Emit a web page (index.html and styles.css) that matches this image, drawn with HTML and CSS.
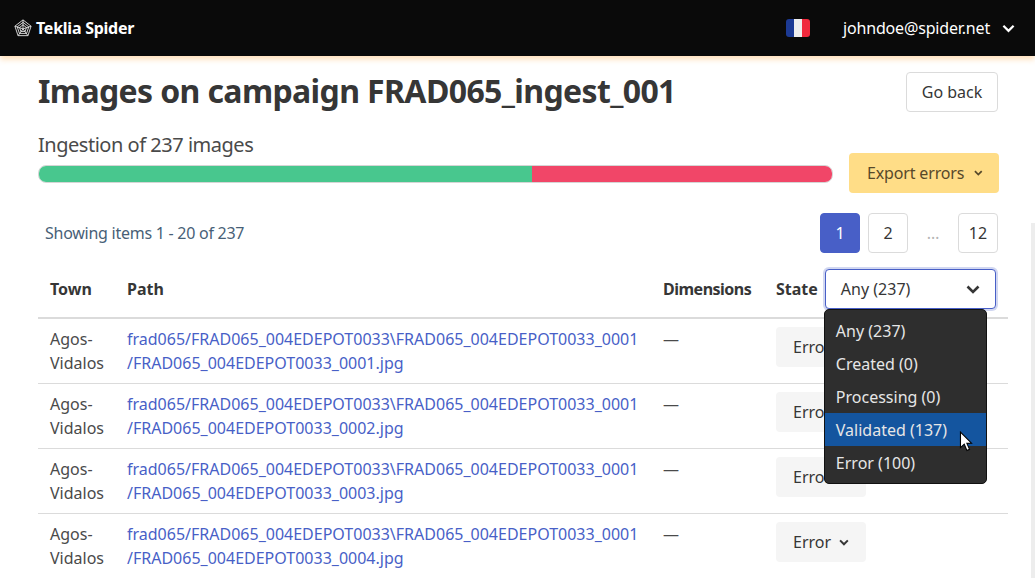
FILE: index.html
```html
<!DOCTYPE html>
<html lang="en">
<head>
  <meta charset="UTF-8">
  <title>Teklia Spider</title>
  <link rel="stylesheet" href="styles.css">
</head>
<body>
  <!-- Top bar -->
  <nav class="navbar">
    <a class="brand">
      <svg class="brand-icon" viewBox="0 0 20 20" width="18" height="18" fill="none" stroke="#e4e4e4" stroke-width="1">
        <path d="M10 1 L19 8 L15.5 18.5 L4.500 18.5 L1 8 Z"/>
        <path d="M10 3.800 L16.400 8.700 L14 16 L6 16 L3.600 8.700 Z"/>
        <path d="M10 6.500 L13.800 9.400 L12.400 13.800 L7.600 13.800 L6.200 9.400 Z"/>
        <path d="M10 1 L10 11 M19 8 L10 11 M15.500 18.500 L10 11 M4.500 18.500 L10 11 M1 8 L10 11"/>
      </svg>
      Teklia Spider
    </a>
    <div class="nav-right">
      <span class="flag"><i class="flag-blue"></i><i class="flag-white"></i><i class="flag-red"></i></span>
      <span class="user">johndoe@spider.net</span>
      <svg class="chevron" viewBox="0 0 14 9" width="13" height="9"><path d="M1.500 1.500 L7 7 L12.500 1.500" fill="none" stroke="#fff" stroke-width="2.400"/></svg>
    </div>
  </nav>

  <div class="scroll-track"></div>

  <div class="page">
    <div class="title-row">
      <h1>Images on campaign FRAD065_ingest_001</h1>
      <button class="btn btn-back">Go back</button>
    </div>

    <div class="progress-row">
      <div class="progress-col">
        <div class="subtitle">Ingestion of 237 images</div>
        <div class="progress">
          <div class="progress-ok"></div>
          <div class="progress-err"></div>
        </div>
      </div>
      <button class="btn btn-export">Export errors
        <svg viewBox="0 0 14 9" width="11" height="8"><path d="M1.500 1.500 L7 7 L12.500 1.500" fill="none" stroke="#57492a" stroke-width="2.800"/></svg>
      </button>
    </div>

    <div class="pager-row">
      <span class="showing">Showing items 1 - 20 of 237</span>
      <div class="pager">
        <a class="page-link current">1</a>
        <a class="page-link">2</a>
        <span class="page-gap">…</span>
        <a class="page-link">12</a>
      </div>
    </div>

    <table class="images">
      <thead>
        <tr>
          <th class="col-town">Town</th>
          <th class="col-path">Path</th>
          <th class="col-dim">Dimensions</th>
          <th class="col-state">
            <div class="state-head">
              State
              <div class="select-wrap">
                <div class="select">Any (237)
                  <svg viewBox="0 0 14 9" width="14" height="9"><path d="M1.500 1.500 L7 7 L12.500 1.500" fill="none" stroke="#363636" stroke-width="2.600"/></svg>
                </div>
                <ul class="menu">
                  <li>Any (237)</li>
                  <li>Created (0)</li>
                  <li>Processing (0)</li>
                  <li class="active">Validated (137)</li>
                  <li>Error (100)</li>
                </ul>
                <svg class="cursor" viewBox="0 0 12 19" width="14" height="21"><path d="M1 1 L1 15 L4.400 12 L6.800 17.600 L9.200 16.600 L6.800 11.200 L11 11 Z" fill="#fff" stroke="#000" stroke-width="1"/></svg>
              </div>
            </div>
          </th>
        </tr>
      </thead>
      <tbody>
        <tr>
          <td>Agos-Vidalos</td>
          <td><a>frad065/FRAD065_004EDEPOT0033\FRAD065_004EDEPOT0033_0001<br>/FRAD065_004EDEPOT0033_0001.jpg</a></td>
          <td>—</td>
          <td><button class="btn btn-state">Error <svg viewBox="0 0 14 9" width="10" height="7"><path d="M1.500 1.500 L7 7 L12.500 1.500" fill="none" stroke="#363636" stroke-width="2.800"/></svg></button></td>
        </tr>
        <tr>
          <td>Agos-Vidalos</td>
          <td><a>frad065/FRAD065_004EDEPOT0033\FRAD065_004EDEPOT0033_0001<br>/FRAD065_004EDEPOT0033_0002.jpg</a></td>
          <td>—</td>
          <td><button class="btn btn-state">Error <svg viewBox="0 0 14 9" width="10" height="7"><path d="M1.500 1.500 L7 7 L12.500 1.500" fill="none" stroke="#363636" stroke-width="2.800"/></svg></button></td>
        </tr>
        <tr>
          <td>Agos-Vidalos</td>
          <td><a>frad065/FRAD065_004EDEPOT0033\FRAD065_004EDEPOT0033_0001<br>/FRAD065_004EDEPOT0033_0003.jpg</a></td>
          <td>—</td>
          <td><button class="btn btn-state">Error <svg viewBox="0 0 14 9" width="10" height="7"><path d="M1.500 1.500 L7 7 L12.500 1.500" fill="none" stroke="#363636" stroke-width="2.800"/></svg></button></td>
        </tr>
        <tr>
          <td>Agos-Vidalos</td>
          <td><a>frad065/FRAD065_004EDEPOT0033\FRAD065_004EDEPOT0033_0001<br>/FRAD065_004EDEPOT0033_0004.jpg</a></td>
          <td>—</td>
          <td><button class="btn btn-state">Error <svg viewBox="0 0 14 9" width="10" height="7"><path d="M1.500 1.500 L7 7 L12.500 1.500" fill="none" stroke="#363636" stroke-width="2.800"/></svg></button></td>
        </tr>
      </tbody>
    </table>
  </div>
</body>
</html>
```

FILE: styles.css
```css
html, body {
  height: 578px;
  overflow: hidden;
}

body {
  font-family: "Noto Sans", sans-serif;
  font-size: 16px;
  line-height: 24px;
  color: #4a4a4a;
  background: #fff;
  margin: 0;
}

.navbar {
  height: 56px;
  background: #0a0a0a;
  color: #fff;
  display: flex;
  align-items: center;
  justify-content: space-between;
  padding: 0 20px 0 14px;
  box-shadow: 0 3px 6px rgba(255, 170, 70, 0.4);
  position: relative;
  z-index: 2;
}

.brand {
  display: flex;
  align-items: center;
  gap: 4px;
  font-weight: 700;
  font-size: 16px;
  letter-spacing: -0.25px;
}

.nav-right {
  display: flex;
  align-items: center;
}

.flag {
  display: flex;
  width: 24px;
  height: 18px;
  border-radius: 3px;
  overflow: hidden;
  margin-right: 33px;
}

.flag i {
  flex: 1;
}

.flag-blue { background: #1c3a94; }
.flag-white { background: #eeeeee; }
.flag-red { background: #f0283c; }

.user {
  margin-right: 12px;
  letter-spacing: -0.17px;
}

.scroll-track {
  position: absolute;
  left: 1031px;
  top: 223px;
  width: 4px;
  bottom: 0;
  background: #ededed;
}

.page {
  padding: 0 27px 0 38px;
}

.title-row {
  display: flex;
  justify-content: space-between;
  align-items: flex-start;
  padding-top: 16px;
}

h1 {
  margin: 0;
  font-size: 32px;
  line-height: 38px;
  font-weight: 700;
  color: #363636;
  letter-spacing: -0.62px;
}

.btn {
  font-family: inherit;
  font-size: 16px;
  height: 40px;
  border-radius: 4px;
  border: 1px solid transparent;
  padding: 0 16px;
  color: #363636;
  background: #fff;
}

.btn-back {
  width: 92px;
  padding: 0;
  border-color: #dbdbdb;
  margin-right: 10px;
}

.progress-row {
  display: flex;
  justify-content: space-between;
  align-items: flex-end;
  margin-top: 20px;
  margin-right: 9px;
}

.progress-col {
  width: 795px;
}

.subtitle {
  font-size: 20px;
  line-height: 25px;
  margin-bottom: 8px;
  letter-spacing: -0.48px;
}

.progress {
  display: flex;
  height: 16px;
  border-radius: 8px;
  overflow: hidden;
  border: 1px solid #d5d5d5;
}

.progress-ok {
  width: 493px;
  background: #48c78e;
}

.progress-err {
  flex: 1;
  background: #f14668;
}

.btn-export {
  width: 150px;
  padding: 0 15px 0 17px;
  background: #ffdd87;
  color: #57492a;
  display: flex;
  align-items: center;
  gap: 10px;
  white-space: nowrap;
  margin-bottom: -10px;
  letter-spacing: -0.15px;
}

.pager-row {
  display: flex;
  justify-content: space-between;
  align-items: center;
  margin-top: 30px;
  margin-right: 10px;
  padding-left: 7px;
}

.showing {
  color: #485f77;
  letter-spacing: -0.26px;
}

.pager {
  display: flex;
  align-items: center;
  gap: 8px;
}

.page-link {
  width: 40px;
  height: 40px;
  box-sizing: border-box;
  border: 1px solid #dbdbdb;
  border-radius: 4px;
  display: flex;
  align-items: center;
  justify-content: center;
  color: #363636;
}

.page-link.current {
  background: #485fc7;
  border-color: #485fc7;
  color: #fff;
}

.page-gap {
  width: 34px;
  text-align: center;
  color: #b5b5b5;
}

.images {
  width: 970px;
  margin-top: 7px;
  border-collapse: collapse;
  table-layout: fixed;
}

.col-town { width: 77px; }
.col-path { width: 536px; }
.col-dim { width: 113px; letter-spacing: -0.5px; }

th, td {
  box-sizing: border-box;
  text-align: left;
  vertical-align: top;
  padding: 8px 12px;
  border-bottom: 1px solid #dbdbdb;
}

th {
  color: #363636;
  font-weight: 700;
  padding-top: 9px;
  padding-bottom: 8px;
  border-bottom-width: 2px;
  vertical-align: middle;
}

td a {
  color: #485fc7;
}

.state-head {
  display: flex;
  align-items: center;
  gap: 7px;
}

.select-wrap {
  position: relative;
}

.select {
  width: 171px;
  height: 40px;
  box-sizing: border-box;
  border: 1px solid #485fc7;
  border-radius: 4px;
  box-shadow: 0 0 0 2px rgba(72, 95, 199, 0.25);
  padding: 0 15px;
  display: flex;
  align-items: center;
  justify-content: space-between;
  font-weight: 400;
  color: #363636;
  background: #fff;
}

.menu {
  position: absolute;
  top: 40px;
  left: -1px;
  width: 163px;
  margin: 0;
  padding: 4px 0;
  list-style: none;
  background: #2e2e2e;
  border: 1px solid #111;
  border-radius: 5px;
  color: #e6e6e6;
  font-weight: 400;
  box-sizing: border-box;
  z-index: 3;
}

.menu li {
  height: 33px;
  line-height: 34px;
  padding-left: 11px;
}

.menu li.active {
  background: #14559f;
}

.cursor {
  position: absolute;
  left: 134px;
  top: 162px;
  z-index: 4;
}

.btn-state {
  background: #f5f5f5;
  width: 90px;
  display: flex;
  align-items: center;
  gap: 8px;
}
```
